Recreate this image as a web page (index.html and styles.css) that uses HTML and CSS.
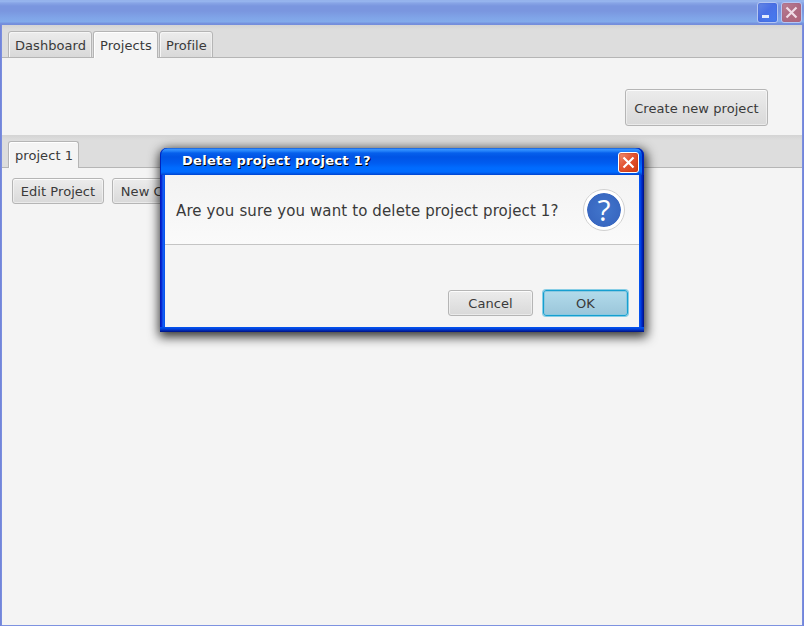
FILE: index.html
```html
<!DOCTYPE html>
<html lang="en">
<head>
<meta charset="utf-8">
<title>Projects</title>
<link rel="stylesheet" href="styles.css">
</head>
<body>
<div class="window">
  <header class="titlebar">
    <button class="ctl minimize" aria-label="Minimize"><svg viewBox="0 0 21 21"><rect x="5" y="13" width="7" height="3" fill="#e4eafb"/></svg></button>
    <button class="ctl close" aria-label="Close"><svg viewBox="0 0 21 21"><path d="M5.5 5.5l10 10M15.5 5.5l-10 10" stroke="#f0dce6" stroke-width="2.2"/></svg></button>
  </header>
  <main class="client">
    <nav class="tabs">
      <div class="tab dashboard">Dashboard</div>
      <div class="tab projects active">Projects</div>
      <div class="tab profile">Profile</div>
    </nav>
    <section class="toolbar"><button class="btn create">Create new project</button></section>
    <nav class="tabs inner"><div class="tab item active">project 1</div></nav>
    <section class="actions">
      <button class="btn edit">Edit Project</button>
      <button class="btn card">New Card</button>
    </section>
  </main>
</div>
<div class="dialog" role="dialog">
  <div class="caption">
    <span class="title">Delete project project 1?</span>
    <button class="ctl dclose" aria-label="Close"><svg viewBox="0 0 21 21"><path d="M5.5 5.5l10 10M15.5 5.5l-10 10" stroke="#fff" stroke-width="2.2"/></svg></button>
  </div>
  <div class="body">
    <div class="message">
      <span class="question">Are you sure you want to delete project project 1?</span>
      <span class="icon">?</span>
    </div>
    <div class="buttons">
      <button class="btn cancel">Cancel</button>
      <button class="btn ok">OK</button>
    </div>
  </div>
</div>
</body>
</html>
```
FILE: styles.css
```css
* { box-sizing: border-box; }
body {
  margin: 0;
  width: 804px;
  height: 626px;
  overflow: hidden;
  font: 13px/16px "DejaVu Sans", sans-serif;
  letter-spacing: .06px;
  color: #3a3a3a;
}
button { font: inherit; letter-spacing: inherit; color: inherit; margin: 0; padding: 0; }
.window {
  height: 626px;
  display: flex;
  flex-direction: column;
  background: linear-gradient(90deg, #6f80d8, #7d92e0 2px, #7d92e0 802px, #6f80d8);
}
.titlebar {
  height: 25px;
  flex: none;
  display: flex;
  justify-content: flex-end;
  gap: 3px;
  padding: 2px 2px 0 0;
  background: linear-gradient(#90ade8 0, #9ab9f0 1px, #88a5e6 3px, #7a96df 6px, #7a96df 11px, #80a5e8 18px, #82abea 22px, #7693df 23px, #738cdb 25px);
}
.ctl {
  width: 21px;
  height: 21px;
  flex: none;
  border: 1px solid #b5c6f2;
  border-radius: 3px;
}
.ctl svg { display: block; width: 21px; height: 21px; margin: -1px; }
.minimize { background: linear-gradient(135deg, #6688e4, #4a70e6 45%, #457cf0); box-shadow: inset 0 0 2px #3f60cf; }
.close { background: linear-gradient(135deg, #bb8195, #ad6a82 50%, #b3667b); box-shadow: inset 0 0 2px #985c83; }
.client {
  flex: 1;
  margin: 0 2px 1px;
  background: #f4f4f4;
}
.tabs {
  height: 33px;
  display: flex;
  align-items: flex-end;
  gap: 1px;
  padding: 0 6px;
  background: linear-gradient(#d4d4d4, #dddddd 5px);
  box-shadow: inset 0 -1px #b5b5b5;
}
.tab {
  height: 27px;
  padding: 6px 0 0 6px;
  white-space: nowrap;
  border: 1px solid #b5b5b5;
  border-radius: 3px 3px 0 0;
  background: linear-gradient(#ececec, #d9d9d9);
  box-shadow: inset 1px 1px #f6f6f6, inset -1px 0 #eee;
}
.tab.active { background: #f4f4f4; border-bottom: 0; box-shadow: inset 1px 1px #fff; }
.dashboard { width: 84px; }
.projects { width: 65px; }
.profile { width: 54px; }
.item { width: 71px; }
.toolbar {
  height: 77px;
  display: flex;
  justify-content: flex-end;
  padding: 31px 34px 0 0;
}
.btn {
  flex: none;
  height: 26px;
  padding-top: 2px;
  border: 1px solid #b5b5b5;
  border-radius: 3px;
  background: linear-gradient(#ececec, #d9d9d9);
  box-shadow: inset 0 0 0 1px rgba(255, 255, 255, .45), inset 0 1px #fafafa;
}
.create { width: 143px; height: 37px; padding-top: 3px; }
.actions { display: flex; gap: 8px; padding: 10px; }
.edit { width: 92px; }
.card { width: 81px; }
.dialog {
  position: absolute;
  left: 160px;
  top: 148px;
  width: 484px;
  height: 184px;
  padding: 0 5px 5px;
  border-radius: 7px 7px 0 0;
  background:
    linear-gradient(#0355f0 0, #0142dd 2px, #0020a0 4px, #001280 5px) 0 100% / 100% 5px no-repeat,
    linear-gradient(90deg, #0014b8 0, #0830dc 2px, #1762f4 3px, #0451ec 5px, #0451ec 479px, #0450f0 480px, #0038dc 481px, #0018a4 483px, #001080 484px);
  box-shadow: 1px 3px 11px 2px rgba(0, 0, 0, .8);
}
.caption {
  height: 27px;
  margin: 0 -5px;
  display: flex;
  justify-content: space-between;
  padding: 4px 5px 0 22px;
  border-radius: 7px 7px 0 0;
  background: linear-gradient(#0548c8 0, #3a93ff 1px, #2383fa 3px, #0660ec 5px, #0054e5 9px, #005cf0 15px, #006cff 20px, #006bff 24px, #0043cf 27px);
  box-shadow: inset 1px 0 #0024bd, inset -2px 0 #0020b4;
}
.title { padding-top: 1px; font-weight: bold; letter-spacing: .28px; color: #fff; text-shadow: 1px 1px #000; }
.dclose { border-color: #fff; background: linear-gradient(135deg, #ef9275, #e35432 45%, #d13c12); box-shadow: inset 0 0 2px #b42c0c; }
.body { height: 152px; background: #f4f4f4; }
.message {
  height: 70px;
  display: flex;
  align-items: center;
  justify-content: space-between;
  padding: 0 14px 0 11px;
  background: linear-gradient(#f3f3f3, #fafafa);
  border-bottom: 1px solid #c4c4c4;
}
.question { font-size: 15px; letter-spacing: .12px; white-space: nowrap; padding-top: 2px; }
.icon {
  width: 42px;
  height: 42px;
  border: 4px solid #fff;
  border-radius: 50%;
  outline: 1px solid #d0d0d0;
  outline-offset: -1px;
  background: radial-gradient(circle, #4276cc, #3461bc) padding-box;
  color: #fff;
  text-align: center;
  font: 30px/33px "Open Sans", sans-serif;
}
.buttons { display: flex; justify-content: flex-end; gap: 10px; padding: 45px 11px 0 0; }
.cancel { width: 85px; }
.ok {
  width: 85px;
  border-color: #169fd0;
  background: linear-gradient(#b2dbeb, #9bc6da);
  box-shadow: 0 0 0 1px rgba(3, 158, 211, .45), inset 0 0 0 1px #8ac9e1;
}
```
